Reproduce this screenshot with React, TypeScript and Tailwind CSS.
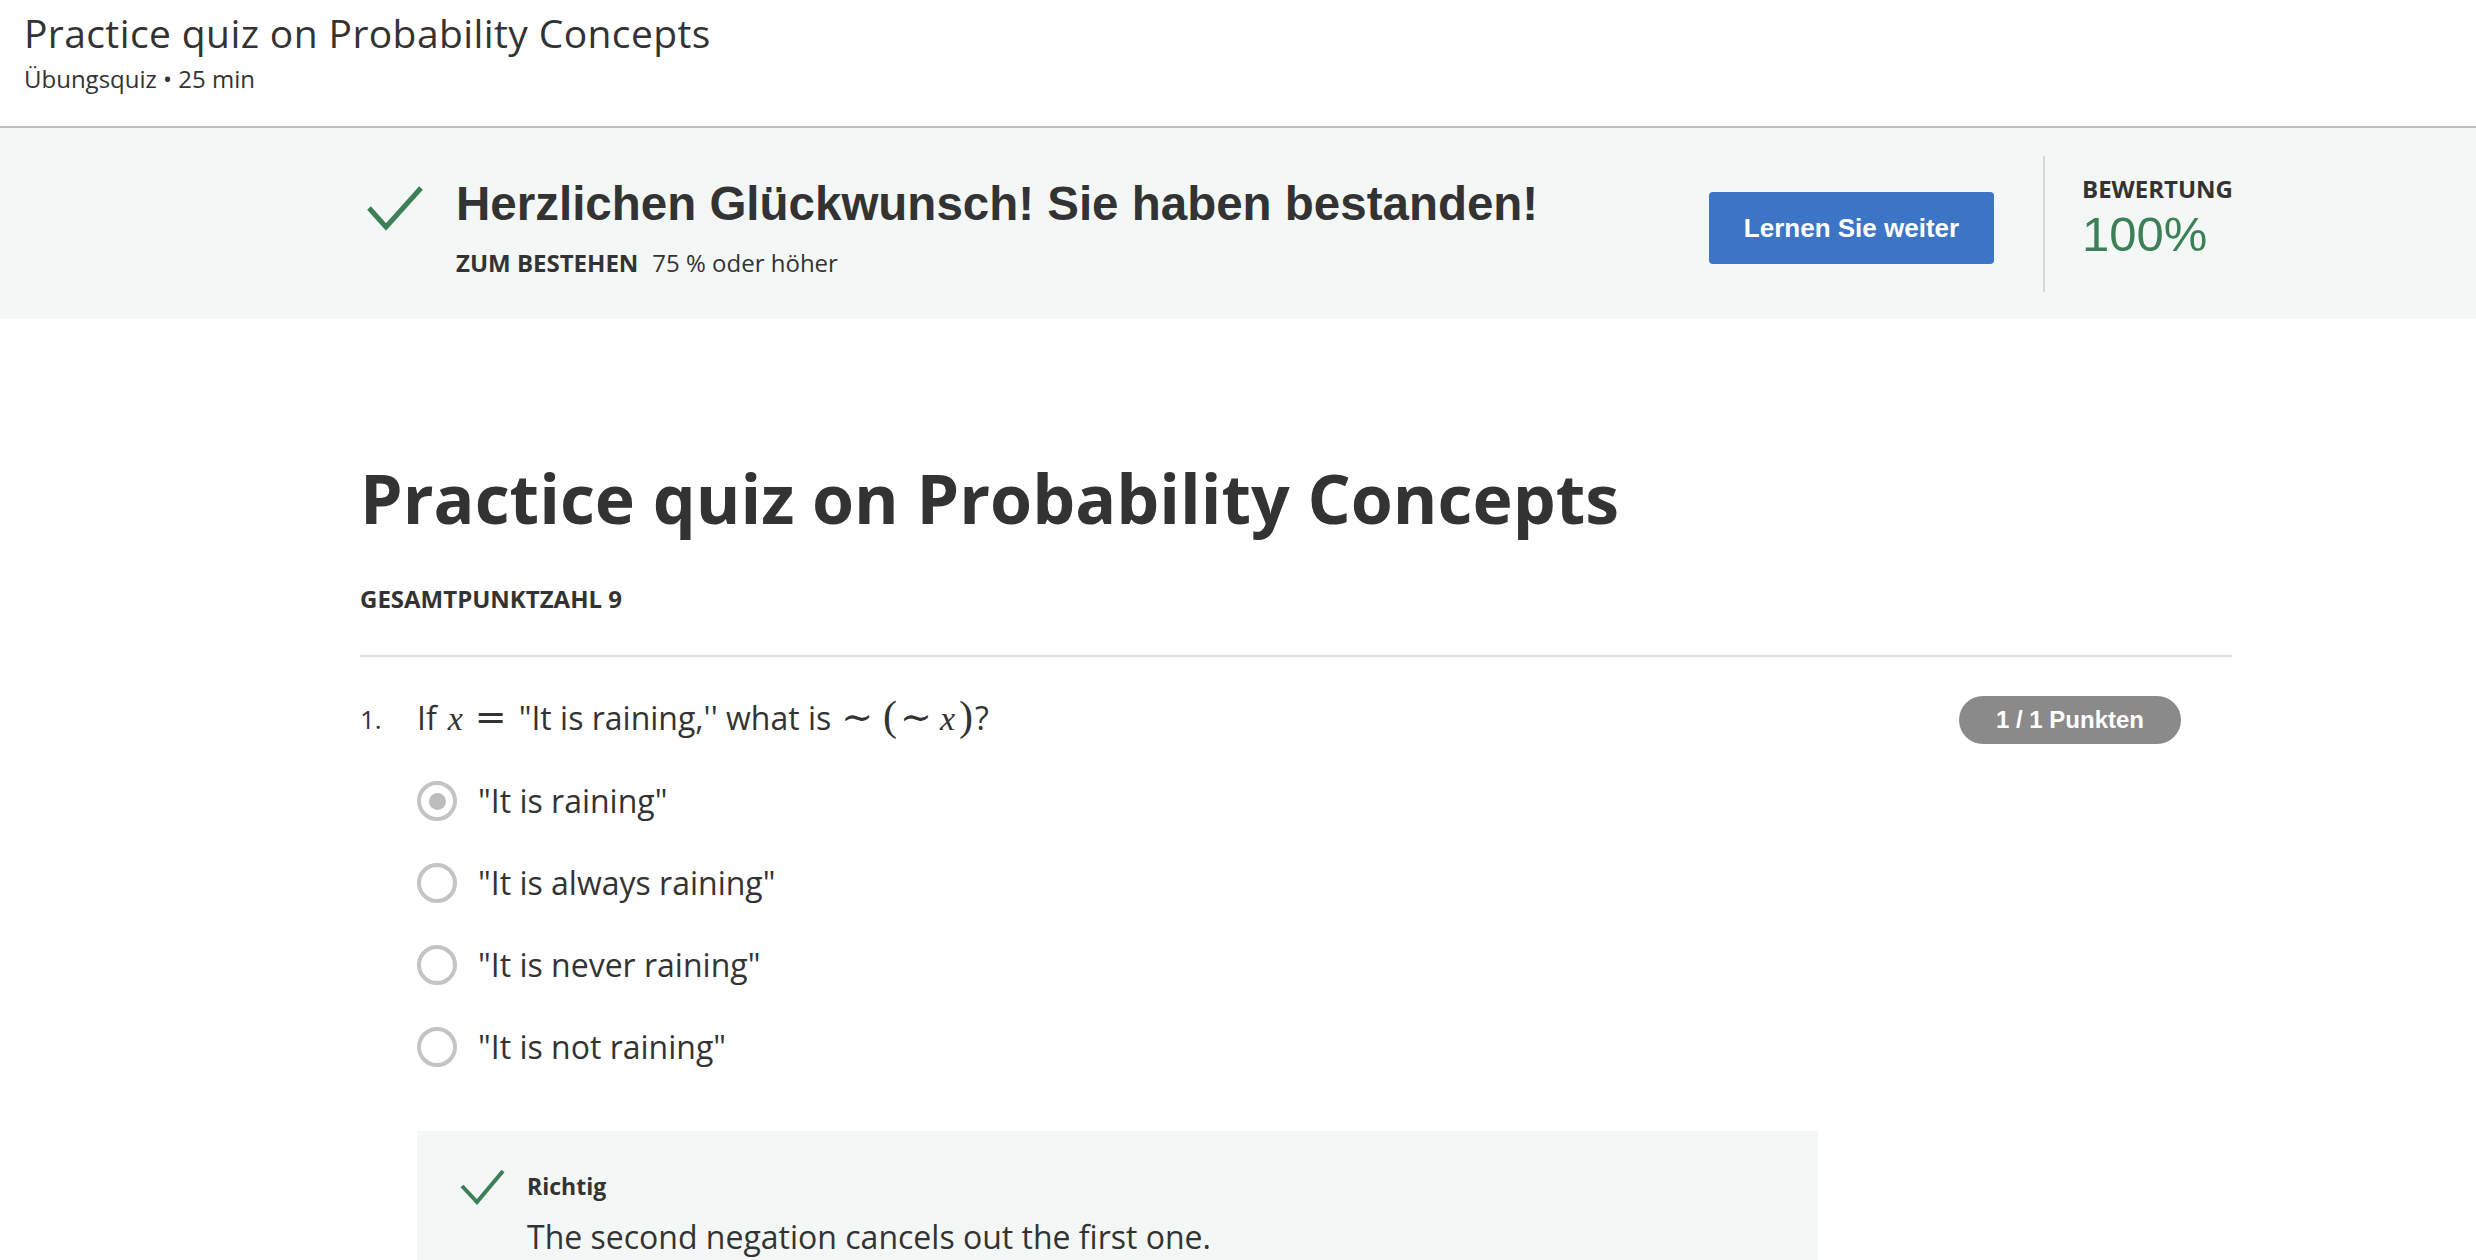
const OPTIONS = [
  { label: '"It is raining"', selected: true },
  { label: '"It is always raining"', selected: false },
  { label: '"It is never raining"', selected: false },
  { label: '"It is not raining"', selected: false },
]

function Check({ className, stroke }: { className: string; stroke: number }) {
  return (
    <svg className={className} viewBox="0 0 60 46" fill="none">
      <path d="M3 23 L20 42 L55 3" stroke="#3d7f56" strokeWidth={stroke} strokeLinejoin="miter" />
    </svg>
  )
}

function Radio({ selected }: { selected: boolean }) {
  return (
    <span className="flex h-[40px] w-[40px] shrink-0 items-center justify-center rounded-full border-[4px] border-[#c4c4c4] bg-white">
      {selected && <span className="h-[17px] w-[17px] rounded-full bg-[#bdbdbd]" />}
    </span>
  )
}

export default function App() {
  return (
    <div className="min-h-screen bg-white font-['Open_Sans',sans-serif] text-[#333]">
      {/* Page header */}
      <header className="h-[128px] border-b-2 border-[#bdbdbd] px-[24px] pt-[11px]">
        <h1 className="text-[39px] leading-[44px] tracking-[0.4px]">Practice quiz on Probability Concepts</h1>
        <p className="mt-[9px] text-[24px] leading-[30px]">Übungsquiz • 25 min</p>
      </header>

      {/* Result banner */}
      <section className="h-[191px] bg-[#f3f8f6]">
        <div className="ml-[360px] flex w-[1872px] items-start">
          <Check className="ml-[6px] mt-[57px] h-[46px] w-[60px] shrink-0" stroke={5} />
          <div className="ml-[30px] pt-[49px]">
            <h2 className="font-['Liberation_Sans',Arial,sans-serif] text-[47.5px] font-bold leading-[54px] text-[#333]">
              Herzlichen Glückwunsch! Sie haben bestanden!
            </h2>
            <p className="mt-[18px] text-[24px] leading-[28px]">
              <span className="font-bold">ZUM BESTEHEN</span>
              <span className="ml-[14px]">75 % oder höher</span>
            </p>
          </div>
          <button className="ml-auto mt-[64px] h-[72px] w-[285px] rounded-[4px] bg-[#3c75c6] font-['Liberation_Sans',Arial,sans-serif] text-[26px] font-bold text-white">
            Lernen Sie weiter
          </button>
          <div className="ml-[49px] mt-[28px] h-[136px] w-[2px] bg-[#d8d8d8]" />
          <div className="ml-[37px] w-[150px] pt-[47px]">
            <p className="text-[24px] font-bold leading-[28px]">BEWERTUNG</p>
            <p className="mt-[3px] font-['Liberation_Sans',Arial,sans-serif] text-[49px] leading-[56px] text-[#3d7f56]">
              100%
            </p>
          </div>
        </div>
      </section>

      {/* Quiz body */}
      <main className="ml-[360px] w-[1872px]">
        <h1 className="mt-[139px] text-[68px] font-bold leading-[80px]">
          Practice quiz on Probability Concepts
        </h1>
        <p className="mt-[47px] text-[24px] font-bold leading-[28px]">GESAMTPUNKTZAHL 9</p>
        <div className="mt-[42px] h-[2px] bg-[#e0e0e0]" />

        <div className="mt-[39px] flex items-start">
          <span className="w-[57px] shrink-0 pt-[8px] text-[26px] leading-[30px]">1.</span>
          <div className="flex-1">
            <p className="whitespace-nowrap text-[32px] leading-[44px]">
              If
              <span className="ml-[11px] font-['Liberation_Serif',serif] text-[34px] italic">x</span>
              <span className="ml-[12px] mr-[12px] font-['DejaVu_Serif',serif] text-[38px] leading-[40px]">=</span>
              "It is raining,'' what is
              <span className="ml-[10px] font-['DejaVu_Serif',serif] text-[38px] leading-[40px]">∼</span>
              <span className="ml-[10px] font-['Liberation_Serif',serif] text-[42px] leading-[40px]">(</span>
              <span className="ml-[3px] font-['DejaVu_Serif',serif] text-[38px] leading-[40px]">∼</span>
              <span className="ml-[8px] font-['Liberation_Serif',serif] text-[34px] italic">x</span>
              <span className="ml-[4px] font-['Liberation_Serif',serif] text-[42px] leading-[40px]">)</span>
              <span className="ml-[2px]">?</span>
            </p>

            <ul className="mt-[38px] flex flex-col gap-[38px]">
              {OPTIONS.map((o) => (
                <li key={o.label} className="flex h-[44px] items-center">
                  <Radio selected={o.selected} />
                  <span className="ml-[21px] text-[32px] leading-[44px]">{o.label}</span>
                </li>
              ))}
            </ul>

            <div className="mt-[62px] flex w-[1401px] items-start bg-[#f3f8f6] pb-[60px] pl-[43px] pt-[38px]">
              <svg className="h-[36px] w-[46px] shrink-0" viewBox="0 0 46 36" fill="none">
                <path d="M2 17 L17 33 L43 2" stroke="#3d7f56" strokeWidth={4} />
              </svg>
              <div className="ml-[21px] pt-[3px]">
                <p className="text-[23px] font-bold leading-[28px]">Richtig</p>
                <p className="mt-[15px] text-[32px] leading-[44px]">The second negation cancels out the first one.</p>
              </div>
            </div>
          </div>
          <span className="mr-[51px] flex h-[48px] w-[222px] shrink-0 items-center justify-center rounded-full bg-[#8a8a8a] font-['Liberation_Sans',Arial,sans-serif] text-[24px] font-bold text-white">
            1 / 1 Punkten
          </span>
        </div>
      </main>
    </div>
  )
}
